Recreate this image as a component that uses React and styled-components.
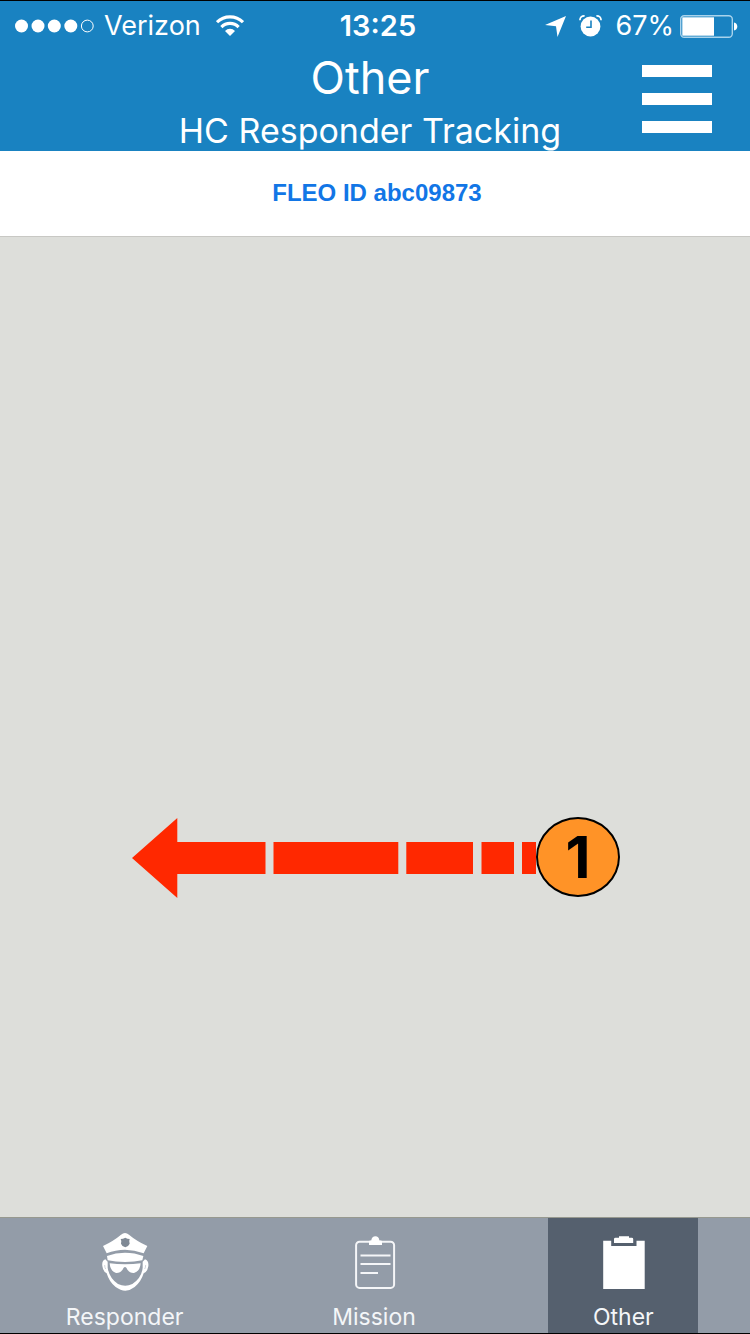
import React from "react";
import styled, { createGlobalStyle } from "styled-components";

const GlobalStyle = createGlobalStyle`
  * { box-sizing: border-box; }
  body { margin: 0; font-family: Inter, "Liberation Sans", sans-serif; }
  button { font: inherit; color: inherit; border: 0; padding: 0; background: none; cursor: pointer; }
  svg { display: block; flex: none; }
`;

const Screen = styled.div`
  min-height: 100vh;
  display: flex;
  flex-direction: column;
  background: #dddeda;
`;

const Header = styled.header`
  background: #1982c1;
  color: #fff;
  border-top: 1px solid #000;
`;

const StatusBar = styled.div`
  display: grid;
  grid-template-columns: 1fr auto 1fr;
  align-items: center;
  height: 50px;
  padding: 0 12px 0 15px;
  font-size: 27px;
  line-height: 32px;
`;

const StatusGroup = styled.div`
  display: flex;
  align-items: center;
  justify-content: ${(p) => (p.$end ? "flex-end" : "flex-start")};
  gap: ${(p) => p.$gap}px;
`;

const Clock = styled.time`
  font-size: 29px;
  font-weight: 600;
  padding-left: 3px;
`;

const TitleRow = styled.div`
  display: grid;
  grid-template-columns: 98px 1fr 108px;
  height: 100px;
`;

const Titles = styled.div`
  grid-column: 2;
  text-align: center;
  white-space: nowrap;
`;

const Title = styled.h1`
  margin: 0;
  font-size: 45px;
  font-weight: 400;
  line-height: 54px;
`;

const Subtitle = styled.p`
  margin: 0;
  font-size: 34px;
  line-height: 52px;
`;

const MenuButton = styled.button`
  width: 70px;
  height: 68px;
  margin-top: 14px;
  display: flex;
  flex-direction: column;
  justify-content: space-between;
`;

const MenuBar = styled.span`
  height: 12px;
  width: 100%;
  background: #fff;
`;

const IdRow = styled.div`
  height: 86px;
  display: flex;
  align-items: center;
  justify-content: center;
  padding: 0 0 2px 4px;
  background: #fff;
  border-bottom: 1px solid #c8c8c4;
`;

const IdLink = styled.a`
  color: #1276e6;
  font: bold 24px/28px "Liberation Sans", sans-serif;
  text-decoration: none;
`;

const Content = styled.main`
  flex: 1;
  display: flex;
  align-items: flex-end;
  justify-content: center;
  padding: 0 0 318px 2px;
`;

const SwipeHint = styled.div`
  display: flex;
  align-items: center;
`;

const StepBadge = styled.span`
  width: 84px;
  height: 80px;
  margin-bottom: 2px;
  display: flex;
  align-items: center;
  justify-content: center;
  border: 2px solid #000;
  border-radius: 50%;
  background: #ff9327;
  color: #000;
  font-size: 58px;
  line-height: 64px;
  font-weight: 700;
`;

const TabBar = styled.nav`
  display: flex;
  justify-content: space-around;
  height: 117px;
  padding-right: 2px;
  background: #939ca8;
  border-top: 1px solid #97998f;
  border-bottom: 1px solid #000;
`;

const Tab = styled.button`
  width: 150px;
  display: flex;
  flex-direction: column;
  align-items: center;
  justify-content: flex-end;
  color: #f4f6f8;
  background: ${(p) => (p.$active ? "#55606e" : "transparent")};
`;

const TabIcon = styled.span`
  height: 62px;
  display: flex;
  align-items: center;
`;

const TabLabel = styled.span`
  margin-top: 8px;
  font-size: 23px;
  line-height: 32px;
`;

const SignalDots = () => (
  <svg width="79" height="14" viewBox="0 0 79 14" fill="#fff" aria-hidden="true">
    {[6.5, 23, 39.3, 55.8].map((x) => (
      <circle key={x} cx={x} cy="7" r="6.5" />
    ))}
    <circle cx="72.3" cy="7" r="5.9" fill="none" stroke="#fff" strokeWidth="1" />
  </svg>
);

const Wifi = () => (
  <svg width="28" height="22" viewBox="0 0 28 22" aria-hidden="true">
    <g fill="none" stroke="#fff" strokeWidth="3.2">
      <path d="M1 7.2A18.5 18.5 0 0 1 27 7.2" />
      <path d="M5.4 12.1A12 12 0 0 1 22.6 12.1" />
    </g>
    <path d="M14 21 9 16A6.8 6.8 0 0 1 19 16Z" fill="#fff" />
  </svg>
);

const Location = () => (
  <svg width="21" height="21" viewBox="0 0 21 21" aria-hidden="true">
    <path d="M21 0 12.5 21 11 10.2 0 9Z" fill="#fff" />
  </svg>
);

const Alarm = () => (
  <svg width="23" height="22" viewBox="0 0 23 22" aria-hidden="true">
    <circle cx="11.5" cy="11.5" r="9.9" fill="#fff" />
    <path d="M.9 5.2C1 2.4 2.8.8 5.6.9M22.1 5.2C22 2.4 20.2.8 17.4.9" fill="none" stroke="#fff" strokeWidth="1.7" />
    <path d="M12 5.5V12.2H7.2" fill="none" stroke="#1982c1" strokeWidth="1.6" />
  </svg>
);

const Battery = () => (
  <svg width="58" height="23" viewBox="0 0 58 23" aria-hidden="true">
    <rect x=".7" y=".7" width="51.6" height="21.6" rx="3.5" fill="none" stroke="#a9d3ec" strokeWidth="1.4" />
    <path d="M2.3 2.3H34V20.7H2.3Z" fill="#fff" />
    <path d="M54 7.5C56 7.8 57.3 9.3 57.3 11.5S56 15.2 54 15.5Z" fill="#fff" />
  </svg>
);

const Arrow = () => (
  <svg width="404" height="80" viewBox="0 0 404 80" fill="#ff2800" aria-hidden="true">
    <path d="M0 40 45.3 0V24H133.5V56H45.3V80Z" />
    <path d="M141.5 24H266.3V56H141.5ZM274.3 24H341V56H274.3ZM349.5 24H382V56H349.5ZM390 24H404V56H390Z" />
  </svg>
);

const ResponderIcon = () => (
  <svg width="50" height="61" viewBox="150 81 150 183" aria-hidden="true">
    <g fill="#fff">
      <path d="M159 123Q192 107 213 89Q225 79 237 89Q258 107 292 123L281 145Q253 134 225 134Q197 134 170 145Z" />
      <path d="M171 153Q197 143 225 143Q254 143 280 153L277 166Q253 171 225 171Q197 171 173 166Z" />
      <path d="M179 175Q200 178 225 178Q251 178 272 175Q270 199 252 204Q236 205 229 188Q225 184 221 188Q214 205 198 204Q180 198 179 175Z" />
      <path d="M166 163Q155 166 157 183Q159 200 170 205Q178 232 197 246Q212 257 226 257Q240 257 254 246Q273 231 281 205Q292 201 295 184Q297 167 285 163L278 170V188Q275 219 247 237Q226 248 204 237Q178 220 173 188V170Z" />
    </g>
    <path d="M212 102Q219 102 226 98Q232 102 239 102Q236 109 239 116Q235 125 226 127Q216 125 213 116Q216 109 212 102Z" fill="#7f8995" />
    <path d="M164 180Q164 188 167 192M287 180Q287 188 284 192" stroke="#b9c0c8" strokeWidth="2" fill="none" />
  </svg>
);

const MissionIcon = () => (
  <svg width="44" height="56" viewBox="-3 -2 44 56" aria-hidden="true">
    <rect x="1.1" y="5.7" width="38" height="46.2" rx="3.5" fill="none" stroke="#f5f6f8" strokeWidth="2" />
    <path d="M14 9V5.7Q14 4.5 15.5 4.5H16.2Q17 .3 20.4 .3T24.4 4.5H25.5Q27 4.5 27 5.7V9Z" fill="#fff" />
    <path d="M5.5 19.5H35.5M5.5 28H35.5M5.5 37H23" stroke="#f5f6f8" strokeWidth="2" />
  </svg>
);

const OtherIcon = () => (
  <svg width="44" height="56" viewBox="-2 -2 44 56" fill="#fff" aria-hidden="true">
    <path d="M.2 4.8H8.2V10H33.5V4.8H41.7V53H.2Z" />
    <path d="M11 7V3Q11 1.8 12.5 1.8H16V.3H26V1.8H28.7Q30.2 1.8 30.2 3V7Z" />
  </svg>
);

const TABS = [
  { label: "Responder", Icon: ResponderIcon },
  { label: "Mission", Icon: MissionIcon },
  { label: "Other", Icon: OtherIcon, active: true },
];

export default function App() {
  return (
    <Screen>
      <GlobalStyle />
      <Header>
        <StatusBar>
          <StatusGroup $gap={15}>
            <StatusGroup $gap={10}>
              <SignalDots />
              <span>Verizon</span>
            </StatusGroup>
            <Wifi />
          </StatusGroup>
          <Clock>13:25</Clock>
          <StatusGroup $gap={6} $end>
            <StatusGroup $gap={13}>
              <Location />
              <Alarm />
              <span>67%</span>
            </StatusGroup>
            <Battery />
          </StatusGroup>
        </StatusBar>
        <TitleRow>
          <Titles>
            <Title>Other</Title>
            <Subtitle>HC Responder Tracking</Subtitle>
          </Titles>
          <MenuButton aria-label="Menu">
            <MenuBar />
            <MenuBar />
            <MenuBar />
          </MenuButton>
        </TitleRow>
      </Header>
      <IdRow>
        <IdLink href="#id">FLEO ID abc09873</IdLink>
      </IdRow>
      <Content>
        <SwipeHint>
          <Arrow />
          <StepBadge>1</StepBadge>
        </SwipeHint>
      </Content>
      <TabBar>
        {TABS.map(({ label, Icon, active }) => (
          <Tab key={label} $active={active} aria-current={active ? "page" : undefined}>
            <TabIcon>
              <Icon />
            </TabIcon>
            <TabLabel>{label}</TabLabel>
          </Tab>
        ))}
      </TabBar>
    </Screen>
  );
}
